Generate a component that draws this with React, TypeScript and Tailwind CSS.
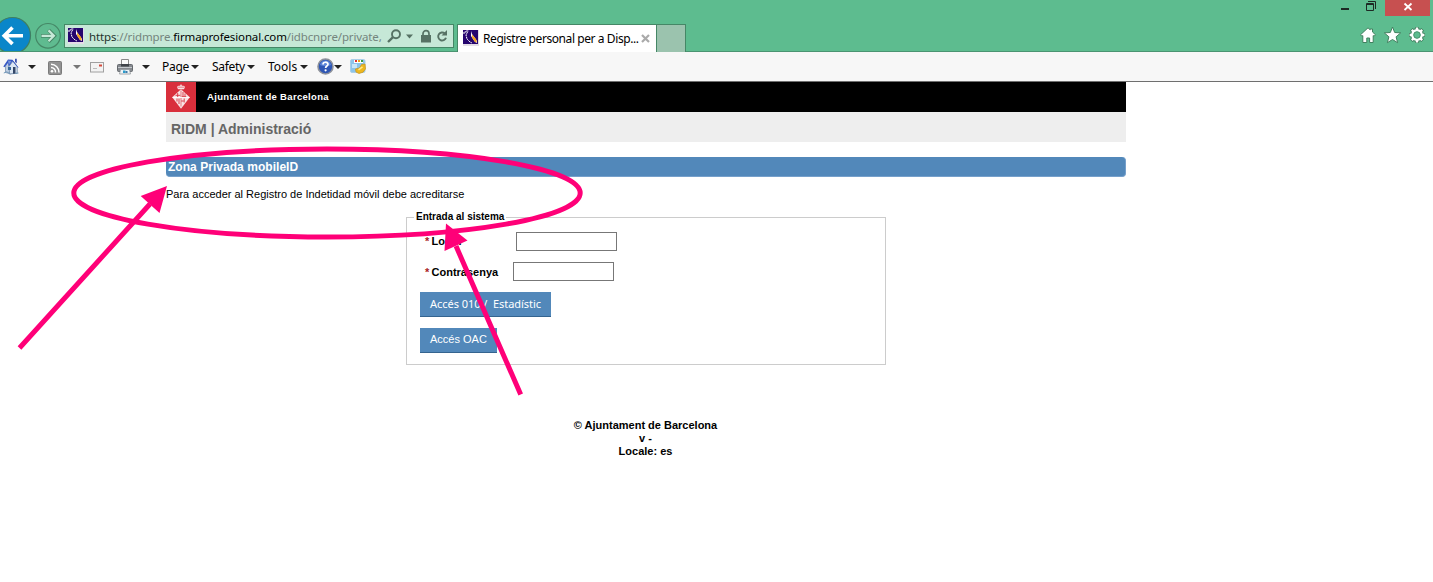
import React from "react";

const Favicon = () => (
  <svg width="16" height="16" viewBox="0 0 16 16" className="shrink-0">
    <rect width="16" height="16" fill="#e3dde6" />
    <rect x="0" y="0" width="15" height="14" fill="#26056e" />
    <path d="M1 4V2h2V1h3M4.500 2L3 5l1 4 3 3 2 1" stroke="#fff" strokeWidth="1" fill="none" strokeDasharray="2 .6" />
    <path d="M8 1l1 3 5 7v2l-2-1-4-6z" fill="#fff" />
    <path d="M9 4.500l4 4.500.8 3.500-2-.8-2.600-4z" fill="#f5a11c" />
  </svg>
);

const Caret = ({ className = "fill-[#222]" }: { className?: string }) => (
  <svg width="8" height="4" viewBox="0 0 8 4" className={"shrink-0 " + className}>
    <path d="M0 0h8L4 4z" />
  </svg>
);

const Navigation = () => (
  <svg width="64" height="51" viewBox="0 0 64 51" className="shrink-0">
    <circle cx="12.500" cy="35.500" r="18" fill="#0a86c9" stroke="#3f7e62" strokeWidth="1.200" />
    <path d="M4.500 35.800H23M12.500 27.500l-8.300 8.300 8.300 8.300" stroke="#fff" strokeWidth="3.600" fill="none" />
    <circle cx="48" cy="35.800" r="12.300" fill="#5fbb90" stroke="#458766" strokeWidth="1.200" />
    <path d="M41 35.800h13.500M48.500 30l5.800 5.800-5.800 5.800" stroke="#458766" strokeWidth="3.800" fill="none" />
    <path d="M41.500 35.800h12M48.500 30.400l5.400 5.400-5.400 5.400" stroke="#c6e8d7" strokeWidth="2.200" fill="none" />
  </svg>
);

const WindowButtons = () => (
  <div className="flex h-4 items-start">
    <svg width="45" height="16" viewBox="0 0 45 16">
      <path d="M1 8h8v2H1z" fill="#1d2a24" />
      <path d="M26.500 3.500h7v7h-7zM26 4.500h8" stroke="#1d2a24" fill="none" />
      <path d="M28 1.500h7.500V9" stroke="#1d2a24" fill="none" />
    </svg>
    <div className="flex h-4 w-[45px] justify-center bg-[#c75050]">
      <svg width="10" height="13" viewBox="0 0 10 13">
        <path d="M1.500 3.500l7 6.500M8.500 3.500l-7 6.500" stroke="#fff" strokeWidth="1.800" />
      </svg>
    </div>
  </div>
);

const BrowserTools = () => (
  <svg width="66" height="20" viewBox="0 0 66 20">
    <g fill="#fff" stroke="#41805f" strokeWidth="1" strokeLinejoin="round">
      <path d="M8 1.800l2.200 2V3h2.300v3l2.900 2.700-1.200 1.500-1-.6v6.900H9.600V12H6.800v4.500H2.800V9.600l-1 .6-1.200-1.500z" />
      <path d="M32.500 1l2.200 5.500 6 .4-4.600 3.900 1.500 5.900-5.100-3.200-5.100 3.200 1.500-5.900-4.600-3.900 6-.4z" />
    </g>
    <g transform="translate(57 9)">
      <circle r="4.900" fill="none" stroke="#41805f" strokeWidth="4" />
      <path d="M0-8V8M-8 0H8M-5.700-5.700L5.700 5.700M5.700-5.700L-5.700 5.700" stroke="#41805f" strokeWidth="4" />
      <path d="M0-7.400V7.400M-7.400 0H7.400M-5.200-5.200L5.200 5.200M5.200-5.200L-5.200 5.200" stroke="#fff" strokeWidth="2.400" />
      <circle r="4.700" fill="#5dbc8f" stroke="#fff" strokeWidth="2.400" />
      <circle r="3.300" fill="#5dbc8f" stroke="#41805f" strokeWidth=".7" />
    </g>
  </svg>
);

const HomeIcon = () => (
  <svg width="16" height="17" viewBox="0 0 16 17" className="shrink-0">
    <path d="M2.500 8L5 3.500l3 5V16l-5.500-1.500z" fill="#bfcfe2" stroke="#7189aa" strokeWidth=".7" />
    <path d="M6 8.500L10 3l4.200 5.500v6.700L6.500 16z" fill="#dce7f3" stroke="#6681a3" strokeWidth=".8" />
    <path d="M12 .8h1.800v4.500L12 4z" fill="#3c52ae" />
    <path d="M.3 8.500L5 1.500l4.500.2 6.200 8-1-.2-5.200-6.300-3.800 5.300L4.800 5 1.500 9.300z" fill="#3657c4" />
    <path d="M5 2.500l3.500.5-2.800 4z" fill="#7895d9" />
    <path d="M5 9h3v3H5z" fill="#38699a" />
    <path d="M10 9h2.500v6.500L10 15.700z" fill="#344768" />
    <path d="M.8 15l3-1.200 3.200 2M12.500 15.500l3-.5" stroke="#7198b8" fill="none" />
  </svg>
);

const FeedIcon = () => (
  <svg width="14" height="14" viewBox="0 0 14 14" className="shrink-0">
    <rect x=".5" y=".5" width="13" height="13" rx="1" fill="#929292" stroke="#7b7b7b" />
    <circle cx="4" cy="10.300" r="1.300" fill="#fff" />
    <path d="M3 6.500a4.500 4.500 0 014.500 5M3 3.200a8 8 0 018 8.300" stroke="#fff" strokeWidth="1.500" fill="none" />
  </svg>
);

const MailIcon = () => (
  <svg width="14" height="11" viewBox="0 0 14 11" className="shrink-0">
    <rect x=".5" y=".5" width="13" height="9.500" fill="#f3f3f3" stroke="#a0a0a0" />
    <path d="M9 2.500h3v2H9z" fill="#d34a3c" />
    <path d="M3 6.500h4" stroke="#bbb" />
  </svg>
);

const PrinterIcon = () => (
  <svg width="16" height="16" viewBox="0 0 16 16" className="shrink-0">
    <path d="M4.500.5h7v6h-7z" fill="#fafafa" stroke="#888" />
    <rect x=".5" y="5.500" width="15" height="7" rx="1" fill="#85898e" stroke="#64686d" />
    <path d="M4 5h8v2.500H4z" fill="#3f4349" />
    <path d="M1 8.500h14" stroke="#c5c9cd" />
    <path d="M3.500 10.500h9l1 4.500h-11z" fill="#eef4f7" stroke="#90969b" strokeWidth=".8" />
    <path d="M6 11.500h2.500V14H6z" fill="#2b9ccc" />
    <path d="M8.500 12h2v2h-2z" fill="#3f7ba8" />
  </svg>
);

const HelpIcon = () => (
  <svg width="17" height="17" viewBox="0 0 17 17" className="shrink-0">
    <circle cx="8.500" cy="8.500" r="7.500" fill="#2e56b4" stroke="#8e929b" strokeWidth="1.600" />
    <path d="M3 7a5.600 5.600 0 0111 0c-3 1.500-8 1.500-11 0z" fill="#5d86d8" />
    <path d="M6 6.500c0-3 5-3 5-.2 0 1.800-2.400 1.700-2.400 3.700" stroke="#fff" strokeWidth="1.700" fill="none" />
    <circle cx="8.600" cy="12.300" r="1.100" fill="#fff" />
  </svg>
);

const AddonIcon = () => (
  <svg width="16" height="15" viewBox="0 0 16 15" className="shrink-0">
    <rect x=".5" y=".5" width="14.500" height="13" rx="1.500" fill="#8cc4ea" stroke="#a9cfe8" />
    <path d="M4 1h9v3H4z" fill="#fff" />
    <path d="M5 1h2v2H5z" fill="#d33" />
    <path d="M8 1h2v2H8z" fill="#e8a51b" />
    <path d="M11 1h2v2h-2z" fill="#3b9b41" />
    <path d="M2 5h5v4H2z" fill="#c9e6f8" />
    <path d="M5.500 10l4-1 2-3.500 3.500-.5.5 5-2.500 3.200L9 14.500 6 13z" fill="#edb71f" stroke="#c6931c" strokeWidth=".7" />
    <path d="M8.500 10.800l4-3" stroke="#ffe88a" strokeWidth="1.500" />
  </svg>
);

const CityCrest = () => (
  <svg width="30" height="30" viewBox="0 0 30 30" className="shrink-0 bg-[#d92f3c]">
    <path d="M15 7.200l8.800 8L15 26.800 6.200 15.200z" fill="#f8e3e4" />
    <path d="M11.700 11v4.300M9.500 13.300h4.800M17 10v5M19 11.500v4M11 16.500v3M13 16.500v5.500M18.200 16.500v4M20.300 14.800h-4.500M17.800 19h-2.600" stroke="#d92f3c" strokeWidth=".9" />
    <path d="M15 8.500v16" stroke="#d92f3c" strokeWidth=".6" />
    <path d="M6.500 15.500h17" stroke="#fff" strokeWidth=".9" />
    <path d="M12 7.300l-1-2.600 1.500-1h5l1.500 1-1 2.600z" fill="#f8e3e4" />
    <path d="M12.300 5.200h1.400M14.300 5.200h1.400M16.300 5.200h1.400" stroke="#d92f3c" strokeWidth=".8" />
    <circle cx="15" cy="3.200" r=".8" fill="#fff" />
  </svg>
);

const Annotations = () => (
  <svg width="600" height="400" viewBox="0 0 600 400" className="pointer-events-none absolute left-0 top-0">
    <g stroke="#ff0078" strokeWidth="5" fill="none">
      <ellipse cx="327" cy="193" rx="253.200" ry="44" />
      <path d="M19.500 348L150 204M520.700 394.500L456 246" />
    </g>
    <path d="M167 186l-7.500 27-18.800-17zM446 223.500l21.500 17-23 10.500z" fill="#ff0078" />
  </svg>
);

export default function App() {
  return (
    <div className="relative flex h-[582px] w-[1433px] flex-col overflow-hidden bg-white font-['Liberation_Sans',sans-serif] text-black">
      <header className="flex h-[52px] shrink-0 items-start border-b border-[#4b9472] bg-[#5dbc8f]">
        <Navigation />
        <div className="mt-6 flex h-6 w-[390px] shrink-0 items-center border border-[#458766] bg-[#c6e8d7] pl-[3px]">
          <Favicon />
          <div className="ml-[5px] w-[296px] whitespace-nowrap pt-[2px] font-['Noto_Sans',sans-serif] text-[11.5px] leading-5 tracking-[-0.13px] text-[#74857d]">
            <span className="text-[#24332c]">https</span>://ridmpre.<span className="text-black">firmaprofesional.com</span>/idbcnpre/private,
          </div>
          <svg width="66" height="16" viewBox="0 0 66 16" className="ml-[2px] shrink-0">
            <circle cx="9" cy="6.300" r="4" fill="none" stroke="#567264" strokeWidth="1.900" />
            <path d="M6 9.200L1 14" stroke="#567264" strokeWidth="2.400" />
            <path d="M19 6.500h7l-3.500 4z" fill="#567264" />
            <path d="M34 7h10v7.500H34z" fill="#567264" />
            <path d="M36 7.500V5.700a3 3 0 016 0v1.800" fill="none" stroke="#567264" strokeWidth="1.700" />
            <path d="M59 9.700a4 4 0 11-1.200-4.300" fill="none" stroke="#567264" strokeWidth="1.900" />
            <path d="M60 2v5.500h-5.500z" fill="#567264" />
          </svg>
        </div>
        <div className="ml-[3px] mt-6 flex h-7 w-[200px] shrink-0 items-center border-x border-t border-[#458766] bg-white pl-[5px]">
          <div className="-mt-[2px]"><Favicon /></div>
          <div className="ml-1 w-[157px] whitespace-nowrap font-['Noto_Sans',sans-serif] text-[12px] leading-5 tracking-[-0.42px]">Registre personal per a Disp...</div>
          <svg width="9" height="9" viewBox="0 0 9 9" className="ml-[1px] shrink-0">
            <path d="M1 1l7 7M8 1L1 8" stroke="#aaa" strokeWidth="2.200" />
          </svg>
        </div>
        <div className="mt-6 h-7 w-[29px] shrink-0 border-r border-t border-[#458766] bg-[#9bc3ae]" />
        <div className="ml-auto flex w-[93px] flex-col">
          <WindowButtons />
          <div className="mt-[10px] pl-5">
            <BrowserTools />
          </div>
        </div>
      </header>

      <nav className="flex h-[30px] shrink-0 items-center border-b border-[#6f6f6f] bg-[#f7f7f7] pl-[3px] font-['Noto_Sans',sans-serif] text-[12px]">
        <HomeIcon />
        <div className="ml-[9px] flex items-center"><Caret /></div>
        <div className="ml-3 mt-[2px] flex items-center"><FeedIcon /></div>
        <div className="ml-[11px] flex items-center"><Caret className="fill-[#777]" /></div>
        <div className="ml-[9px] mt-px flex items-center"><MailIcon /></div>
        <div className="ml-[13px] flex items-center"><PrinterIcon /></div>
        <div className="ml-[9px] flex items-center"><Caret /></div>
        <div className="ml-3 flex w-[50px] items-center"><span className="w-[29px] tracking-[-0.3px]">Page</span><Caret /></div>
        <div className="flex w-[56px] items-center"><span className="w-[35px] tracking-[-0.3px]">Safety</span><Caret /></div>
        <div className="flex w-[49px] items-center"><span className="w-[32px]">Tools</span><Caret /></div>
        <HelpIcon />
        <div className="flex items-center"><Caret /></div>
        <div className="ml-2 flex items-center"><AddonIcon /></div>
      </nav>

      <main className="ml-[166px] flex w-[960px] flex-col">
        <div className="flex h-[30px] items-center bg-black">
          <CityCrest />
          <span className="ml-[11px] pt-px text-[9.5px] font-bold tracking-[0.32px] text-white">Ajuntament de Barcelona</span>
        </div>
        <h1 className="h-[30px] bg-[#eee] pl-[5px] pt-[2px] text-[14px] font-bold leading-[30px] text-[#666]">RIDM | Administració</h1>
        <h2 className="mt-[15px] h-5 rounded-[4px] border-b border-r border-[#76a0cb] bg-[#5288ba] pl-[2px] text-[12px] font-bold leading-5 tracking-[0.04px] text-white">Zona Privada mobileID</h2>
        <p className="mt-[10px] text-[11px] leading-[14px]">Para acceder al Registro de Indetidad móvil debe acreditarse</p>

        <fieldset className="ml-[240px] mt-[9px] flex h-[155px] w-[480px] flex-col border border-[#ccc] pl-[13px]">
          <legend className="-ml-[6px] px-[2px] text-[10px] font-bold leading-[14px]">Entrada al sistema</legend>
          <div className="mt-[7px] flex h-5 items-center text-[11px] font-bold">
            <span className="ml-[5px] w-[6.5px] text-[#a22]">*</span>
            <label className="w-[84.5px]">Login</label>
            <input className="h-[19px] w-[101px] border border-[#777] bg-white" />
          </div>
          <div className="mt-[10px] flex h-5 items-center text-[11px] font-bold">
            <span className="ml-[5px] w-[6.5px] pt-[2px] text-[#a22]">*</span>
            <label className="w-[81.5px] pt-[2px]">Contrasenya</label>
            <input className="h-[19px] w-[101px] border border-[#777] bg-white" />
          </div>
          <button className="mt-[11px] h-[25px] w-[131px] shrink-0 whitespace-pre border-b border-[#34648f] bg-[#5288ba] pl-[10px] text-left font-['Noto_Sans',sans-serif] text-[11px] leading-6 tracking-[-0.04px] text-white">Accés 010 /  Estadístic</button>
          <button className="mt-[11px] flex h-[25px] w-[77px] shrink-0 items-start border-b border-[#34648f] bg-[#5288ba] pl-[10px] text-left text-[11px] leading-[22px] text-white">Accés OAC</button>
        </fieldset>

        <footer className="mt-[54px] pr-[1px] text-center text-[11px] font-bold leading-[13px]">
          © Ajuntament de Barcelona
          <br />v -<br />
          Locale: es
        </footer>
      </main>
      <Annotations />
    </div>
  );
}
